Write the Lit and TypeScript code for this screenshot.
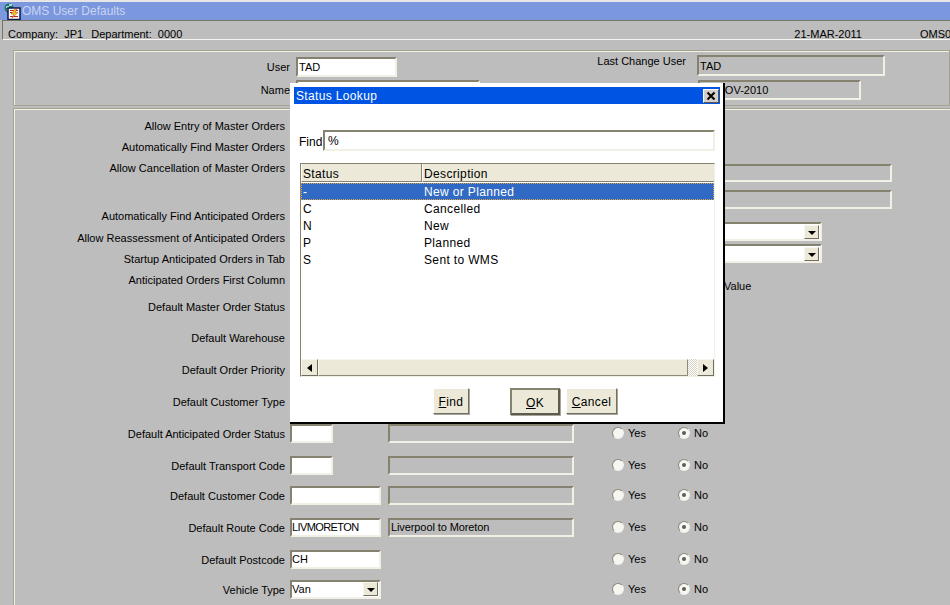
import {LitElement, html, css, nothing} from 'lit';
import {customElement} from 'lit/decorators.js';

type FormRow = {
  label?: string;
  h: number;
  code?: string;
  wide?: boolean;
  tight?: boolean;
  desc?: string;
  showDesc?: boolean;
  select?: boolean;
  radios?: boolean;
};

const rows: FormRow[] = [
  {label: 'Allow Entry of Master Orders', h: 20},
  {label: 'Automatically Find Master Orders', h: 22},
  {label: 'Allow Cancellation of Master Orders', h: 20},
  {h: 28},
  {label: 'Automatically Find Anticipated Orders', h: 20},
  {label: 'Allow Reassessment of Anticipated Orders', h: 24},
  {label: 'Startup Anticipated Orders in Tab', h: 18},
  {label: 'Anticipated Orders First Column', h: 24},
  {label: 'Default Master Order Status', h: 30},
  {label: 'Default Warehouse', h: 32},
  {label: 'Default Order Priority', h: 32},
  {label: 'Default Customer Type', h: 32},
  {label: 'Default Anticipated Order Status', h: 32, code: '', showDesc: true, radios: true},
  {label: 'Default Transport Code', h: 32, code: '', showDesc: true, radios: true},
  {label: 'Default Customer Code', h: 28, code: '', wide: true, showDesc: true, radios: true},
  {label: 'Default Route Code', h: 36, code: 'LIVMORETON', wide: true, tight: true, desc: 'Liverpool to Moreton', showDesc: true, radios: true},
  {label: 'Default Postcode', h: 28, code: 'CH', wide: true, radios: true},
  {label: 'Vehicle Type', h: 32, code: 'Van', wide: true, select: true, radios: true},
];

const lookup = [
  ['-', 'New or Planned'],
  ['C', 'Cancelled'],
  ['N', 'New'],
  ['P', 'Planned'],
  ['S', 'Sent to WMS'],
];

@customElement('app-root')
export class AppRoot extends LitElement {
  static styles = css`
    :host {
      display: block;
      position: relative;
      width: 950px;
      height: 605px;
      overflow: hidden;
      background: #bdbdbd;
      color: #000;
      font: 11px/14px 'Liberation Sans', Arial, sans-serif;
    }

    .titlebar {
      height: 20px;
      box-sizing: border-box;
      display: flex;
      align-items: center;
      gap: 1px;
      padding-left: 4px;
      border-top: 2px solid #e6e6e6;
      background: #7b97de;
      color: #c9d5f3;
      font-size: 12px;
    }

    .titlebar svg {
      margin-top: 1px;
    }

    .info {
      height: 20px;
      margin-left: 2px;
      padding: 7px 0 0 5px;
      box-sizing: border-box;
      display: flex;
      border-top: 1px solid #77756a;
      border-left: 1px solid #77756a;
      border-bottom: 1px solid #f6f6f0;
      white-space: nowrap;
      line-height: 13px;
    }

    .info span:nth-child(2) {
      margin-left: 8px;
    }

    .info span:nth-child(3) {
      margin-left: 612px;
    }

    .info span:nth-child(4) {
      margin-left: 58px;
    }

    .panel {
      margin-left: 13px;
      border: 1px solid #a5a392;
      box-shadow: inset 1px 1px 0 #f3f1e6;
      box-sizing: border-box;
    }

    .panel.top {
      height: 56px;
      margin-top: 10px;
      display: grid;
      grid-template-columns: 282px 401px 1fr;
      grid-template-rows: 25px 21px;
      padding-top: 3px;
    }

    .panel.main {
      height: 500px;
      margin-top: 2px;
      display: flex;
      border-right: none;
    }

    .top-label {
      display: flex;
      align-items: center;
      justify-content: flex-end;
      padding-right: 6px;
    }

    .top-field {
      display: flex;
      align-items: center;
    }

    .top-field.first {
      align-items: flex-start;
      padding-top: 1px;
    }

    .last-change {
      align-self: flex-start;
      margin: 0 11px 0 auto;
    }

    .shift {
      margin-left: 1px;
      padding-left: 0;
    }

    .field {
      box-sizing: border-box;
      height: 19px;
      flex: none;
      display: flex;
      align-items: center;
      padding-left: 1px;
      border: 2px solid;
      border-color: #85836f #f2f0e4 #f2f0e4 #85836f;
      white-space: nowrap;
      overflow: hidden;
    }

    .white {
      background: #fff;
    }

    .w43 {
      width: 43px;
    }

    .w91 {
      width: 91px;
      padding-left: 0;
    }

    .tight {
      letter-spacing: -0.6px;
    }

    .w101 {
      width: 101px;
      height: 20px;
    }

    .w184 {
      width: 184px;
      height: 20px;
    }

    .w186 {
      width: 186px;
      letter-spacing: -0.1px;
    }

    .w188 {
      width: 188px;
      height: 21px;
    }

    .w163 {
      width: 163px;
      height: 20px;
    }

    .form {
      width: 690px;
      flex: none;
      padding-top: 7px;
    }

    .row {
      display: grid;
      grid-template-columns: 276px 98px 224px 66px 1fr;
      align-items: center;
    }

    .row .field,
    .radio {
      margin-bottom: 2px;
    }

    .row-label {
      grid-column: 1;
      text-align: right;
      padding-right: 5px;
      white-space: nowrap;
    }

    .row-label + .field {
      grid-column: 2;
    }

    .desc {
      grid-column: 3;
    }

    .radio {
      display: flex;
      align-items: center;
      gap: 3px;
    }

    .radio.yes {
      grid-column: 4;
      gap: 4px;
    }

    .radio.no {
      grid-column: 5;
      gap: 4px;
    }

    .dot {
      box-sizing: border-box;
      width: 12px;
      height: 12px;
      display: flex;
      align-items: center;
      justify-content: center;
      border-radius: 50%;
      border: 1px solid;
      border-color: #8a887a #eeeeea #eeeeea #8a887a;
      background: #f7f6f0;
    }

    .dot.on::after {
      content: '';
      width: 4px;
      height: 4px;
      border-radius: 50%;
      background: #5c5c5c;
    }

    .select {
      justify-content: space-between;
      padding-right: 1px;
    }

    .drop {
      box-sizing: border-box;
      width: 15px;
      height: 14px;
      flex: none;
      display: flex;
      align-items: center;
      justify-content: center;
      background: #ece9d8;
      border: 1px solid;
      border-color: #f6f5ee #716f64 #716f64 #f6f5ee;
    }

    .drop::after {
      content: '';
      border-top: 4px solid #000;
      border-left: 4px solid transparent;
      border-right: 4px solid transparent;
      margin-top: 2px;
    }

    .side {
      display: flex;
      flex-direction: column;
      align-items: flex-start;
      padding-top: 55px;
    }

    .side .field.long {
      width: 188px;
      height: 18px;
    }

    .side .field.long + .field.long {
      margin-top: 8px;
      height: 19px;
    }

    .side .field.combo {
      width: 118px;
      height: 19px;
    }

    .side .first {
      margin-top: 13px;
    }

    .side .second {
      margin-top: 3px;
    }

    .side .value {
      margin: 16px 0 0 20px;
    }

    .dialog {
      position: absolute;
      left: 290px;
      top: 83px;
      width: 435px;
      height: 341px;
      box-sizing: border-box;
      padding: 4px 3px 0 4px;
      display: flex;
      flex-direction: column;
      background: #fff;
      border-right: 2px solid #000;
      border-bottom: 2px solid #000;
      font-size: 12px;
      letter-spacing: 0.35px;
    }

    .dialog-title {
      height: 17px;
      flex: none;
      display: flex;
      align-items: center;
      justify-content: space-between;
      padding: 0 1px 0 2px;
      background: #0054e3;
      color: #fff;
    }

    .close {
      box-sizing: border-box;
      width: 16px;
      height: 14px;
      display: flex;
      background: #d4d0c8;
      border: 1px solid;
      border-color: #fff #555 #555 #fff;
    }

    .find-row {
      display: flex;
      align-items: center;
      margin: 26px 0 0 5px;
      height: 21px;
      flex: none;
    }

    .find-label {
      width: 24px;
      padding-top: 2px;
      letter-spacing: 0;
    }

    .find-row .field {
      width: 392px;
      height: 21px;
      padding-left: 3px;
    }

    .list {
      box-sizing: border-box;
      width: 415px;
      height: 214px;
      flex: none;
      margin: 12px 0 0 6px;
      display: flex;
      flex-direction: column;
      border-top: 1px solid #85836f;
      border-left: 1px solid #85836f;
      border-right: 1px solid #f2f0e4;
      border-bottom: 1px solid #f2f0e4;
    }

    .lhead,
    .lrow {
      display: grid;
      grid-template-columns: 121px 1fr;
    }

    .lhead {
      height: 18px;
      flex: none;
      background: #ece9d8;
    }

    .lhead div {
      box-sizing: border-box;
      padding: 3px 0 0 1px;
      border-right: 1px solid #85836f;
      border-bottom: 1px solid #85836f;
      border-left: 1px solid #fff;
    }

    .lhead div:last-child {
      border-right: none;
    }

    .lbody {
      flex: 1;
      padding-top: 1px;
    }

    .lrow {
      height: 17px;
      line-height: 16px;
    }

    .lrow div {
      padding: 1px 0 0 2px;
    }

    .lrow.sel {
      background: #316ac5;
      color: #fff;
      outline: 1px dotted #d9a441;
      outline-offset: -1px;
    }

    .scroll {
      height: 17px;
      flex: none;
      display: flex;
      background: #ece9d8;
    }

    .sbtn {
      box-sizing: border-box;
      width: 17px;
      height: 17px;
      flex: none;
      display: flex;
      align-items: center;
      justify-content: center;
      background: #ece9d8;
      border: 1px solid;
      border-color: #f6f5ee #716f64 #716f64 #f6f5ee;
    }

    .left-tri {
      border-right: 5px solid #000;
      border-top: 4px solid transparent;
      border-bottom: 4px solid transparent;
    }

    .right-tri {
      border-left: 5px solid #000;
      border-top: 4px solid transparent;
      border-bottom: 4px solid transparent;
    }

    .thumb {
      flex: 1;
      box-sizing: border-box;
      border: 1px solid;
      border-color: #f6f5ee #8d8b7d #8d8b7d #f6f5ee;
    }

    .track {
      width: 9px;
      flex: none;
      background: repeating-conic-gradient(#d4d1c3 0 25%, #fff 0 50%) 0 0 / 2px 2px;
    }

    .buttons {
      display: flex;
      margin: 11px 0 0 139px;
      align-items: flex-start;
    }

    .btn {
      box-sizing: border-box;
      height: 26px;
      padding-top: 2px;
      display: flex;
      align-items: center;
      justify-content: center;
      background: #ece9d8;
      border: 1px solid;
      border-color: #fff #716f64 #716f64 #fff;
      box-shadow: 1px 1px 0 #a8a698;
    }

    .btn.find {
      width: 36px;
    }

    .btn.ok {
      width: 50px;
      height: 27px;
      margin-left: 41px;
      border: 2px solid;
      border-color: #85836f #5e5c50 #5e5c50 #85836f;
    }

    .btn.cancel {
      width: 51px;
      margin-left: 6px;
    }
  `;

  private renderRow(row: FormRow) {
    return html`
      <div class="row" style="height:${row.h}px">
        ${row.label ? html`<div class="row-label">${row.label}</div>` : nothing}
        ${row.code !== undefined
          ? html`<div class="field white ${row.wide ? 'w91' : 'w43'} ${row.tight ? 'tight' : ''} ${row.select ? 'select' : ''}">
              ${row.code}${row.select ? html`<span class="drop"></span>` : nothing}
            </div>`
          : nothing}
        ${row.showDesc ? html`<div class="field w186 desc">${row.desc ?? ''}</div>` : nothing}
        ${row.radios
          ? html`
              <div class="radio yes"><span class="dot"></span>Yes</div>
              <div class="radio no"><span class="dot on"></span>No</div>
            `
          : nothing}
      </div>
    `;
  }

  render() {
    return html`
      <div class="titlebar">
        <svg width="17" height="17" viewBox="0 0 17 17">
          <circle cx="5" cy="5" r="4.5" fill="#1f6f68" />
          <path d="M2 3h3v2H2zM5 1h3v2H5zM3 6h2v2H3z" fill="#9adccb" />
          <rect x="4" y="5" width="12" height="11.5" fill="#fff" stroke="#0c1a48" stroke-width="1.5" />
          <path d="M6 7h8v1H6zM6 9h3v1H6zM6 13h8v1H6z" fill="#c81e1e" />
          <path d="M11 6 7 11h3l-2 4 6-5.500h-3l2-3.500z" fill="#f5d320" stroke="#b03010" stroke-width=".5" />
        </svg>
        OMS User Defaults
      </div>
      <div class="info">
        <span>Company:&nbsp; JP1</span>
        <span>Department:&nbsp; 0000</span>
        <span>21-MAR-2011</span>
        <span>OMS01</span>
      </div>

      <section class="panel top">
        <div class="top-label">User</div>
        <div class="top-field">
          <div class="field white w101">TAD</div>
          <div class="last-change">Last Change User</div>
        </div>
        <div class="top-field first"><div class="field w188">TAD</div></div>
        <div class="top-label">Name</div>
        <div class="top-field"><div class="field white w184"></div></div>
        <div class="top-field"><div class="field w163 shift">12-NOV-2010</div></div>
      </section>

      <section class="panel main">
        <div class="form">${rows.map(row => this.renderRow(row))}</div>
        <div class="side">
          <div class="field long"></div>
          <div class="field long"></div>
          <div class="field white combo select first"><span></span><span class="drop"></span></div>
          <div class="field white combo select second"><span></span><span class="drop"></span></div>
          <div class="value">Value</div>
        </div>
      </section>

      <div class="dialog">
        <div class="dialog-title">
          Status Lookup
          <span class="close">
            <svg width="14" height="12" viewBox="0 0 14 12">
              <path d="M3.500 2.500 10.500 9.500M10.500 2.500 3.500 9.500" stroke="#000" stroke-width="2" />
            </svg>
          </span>
        </div>
        <div class="find-row"><span class="find-label">Find</span><div class="field white">%</div></div>
        <div class="list">
          <div class="lhead"><div>Status</div><div>Description</div></div>
          <div class="lbody">
            ${lookup.map(
              ([code, text], i) => html`
                <div class="lrow ${i === 0 ? 'sel' : ''}"><div>${code}</div><div>${text}</div></div>
              `
            )}
          </div>
          <div class="scroll">
            <span class="sbtn"><span class="left-tri"></span></span>
            <span class="thumb"></span>
            <span class="track"></span>
            <span class="sbtn"><span class="right-tri"></span></span>
          </div>
        </div>
        <div class="buttons">
          <div class="btn find"><span><u>F</u>ind</span></div>
          <div class="btn ok"><span><u>O</u>K</span></div>
          <div class="btn cancel"><span><u>C</u>ancel</span></div>
        </div>
      </div>
    `;
  }
}
